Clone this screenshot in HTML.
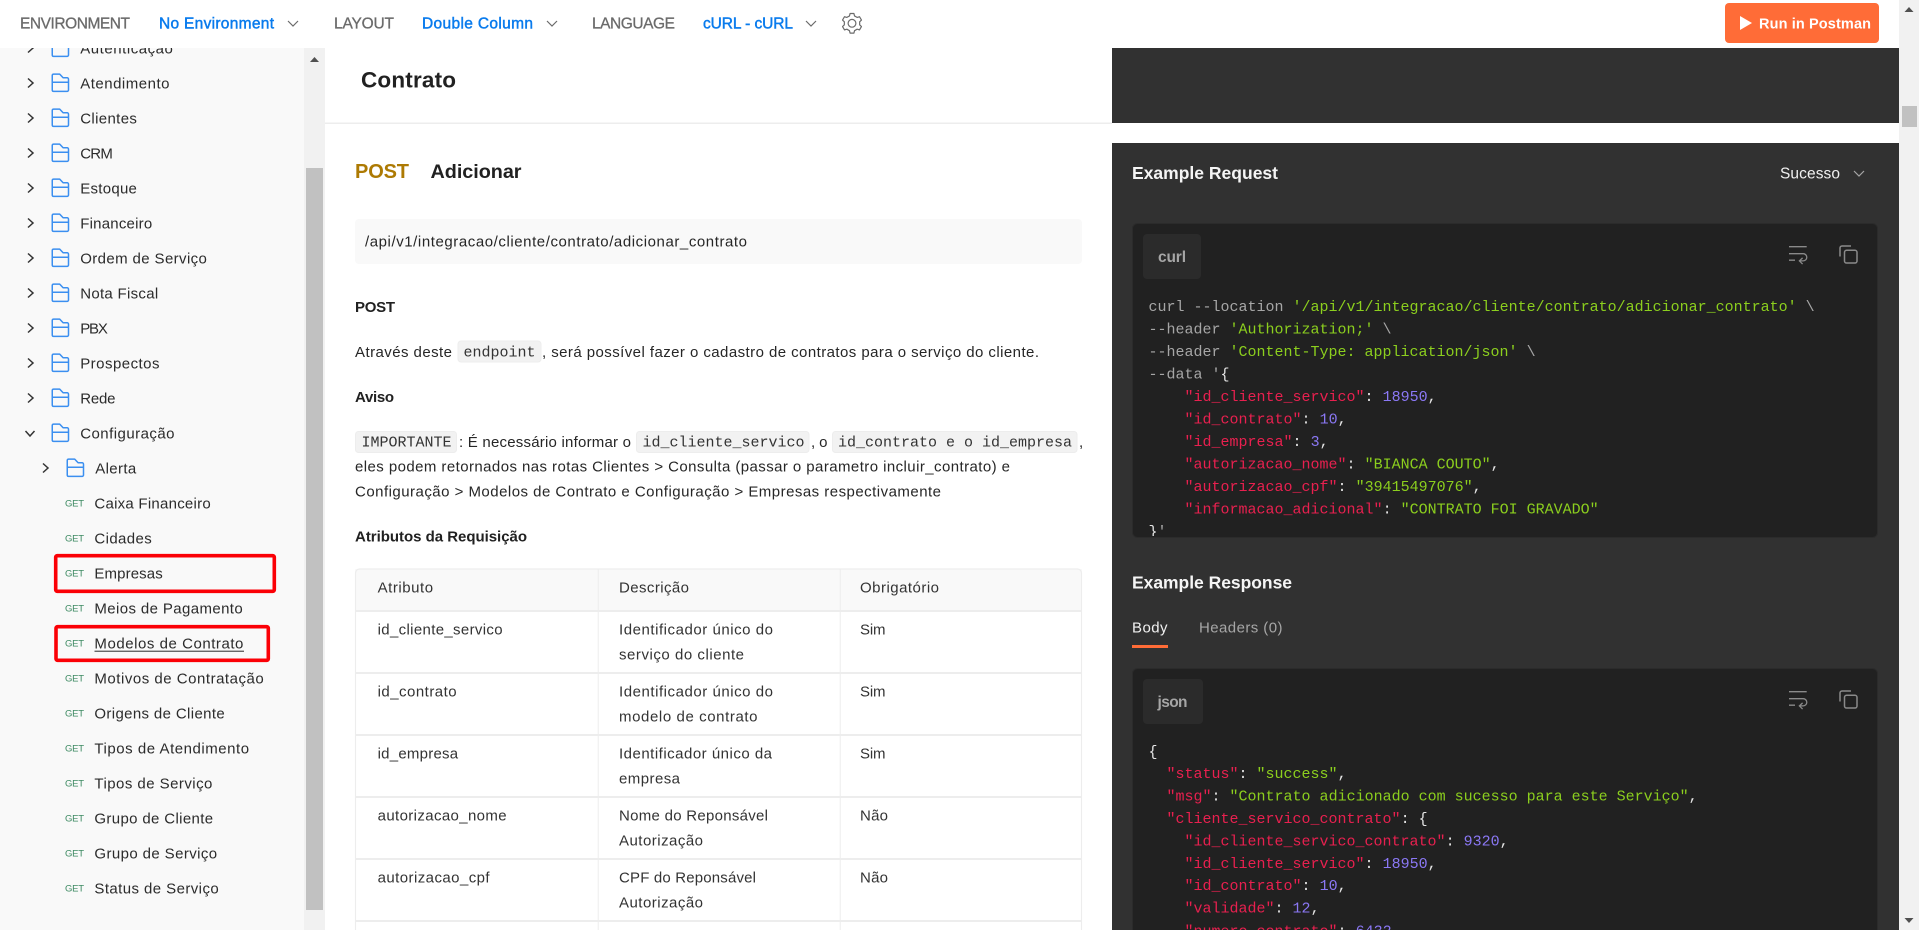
<!DOCTYPE html>
<html lang="pt">
<head>
<meta charset="utf-8">
<title>Contrato</title>
<style>
html,body{margin:0;padding:0;width:1919px;height:930px;overflow:hidden;background:#fff}
svg{display:block;position:absolute;left:0;top:0}
text{font-family:"Liberation Sans",sans-serif;white-space:pre}
.s{font-size:15px;fill:#2b2b2b}
.g{font-size:9.5px;fill:#3d8a62}
.t{font-size:15.5px;fill:#6b6b6b;stroke:#6b6b6b;stroke-width:.3px}
.b{font-size:15.5px;fill:#097bed;stroke:#097bed;stroke-width:.45px}
.p{font-size:15px;fill:#262626}
.h{font-size:15px;fill:#212121;font-weight:700}
.d{font-size:15px;fill:#333}
.w{font-size:17.5px;fill:#f5f5f5;font-weight:700}
.m{font-family:"Liberation Mono",monospace;font-size:15px;fill:#a6a6a6}
.i{font-family:"Liberation Mono",monospace;font-size:15px;fill:#333}
.k{fill:#e8204f}.v{fill:#8ccf1e}.n{fill:#8b78f5}.c{fill:#e6e6e6}
</style>
</head>
<body>
<svg width="1919" height="930" viewBox="0 0 1919 930" xmlns="http://www.w3.org/2000/svg">
<defs>
<g id="fo" fill="none" stroke="#3b8ff0" stroke-width="1.5" stroke-linejoin="round">
<path d="M.75 -7.6A1.4 1.4 0 0 1 2.1 -8.9H8.2L11.6 -5.2H15.6A1.4 1.4 0 0 1 17 -3.8V7A1.4 1.4 0 0 1 15.6 8.4H2.1A1.4 1.4 0 0 1 .75 7Z"/>
<path d="M.75 -.7H17"/>
</g>
<path id="cr" d="M-2.5 -4.5L2.5 0L-2.5 4.5" fill="none" stroke="#333" stroke-width="1.5"/>
<g id="wr" fill="none" stroke="#8a8a8a" stroke-width="1.3">
<path d="M0 0H17.7M0 7H14.2a3.6 3.6 0 0 1 0 7.2H10.8M13.6 11.2L10.4 14.2L13.6 17.4M0 13.5H6"/>
</g>
<g id="cp" fill="none" stroke="#8a8a8a" stroke-width="1.5">
<path d="M0 10.5V2a2 2 0 0 1 2-2H11"/>
<rect x="4.5" y="4.3" width="12.5" height="12.7" rx="2"/>
</g>
<clipPath id="c1"><rect x="1133" y="224" width="744" height="312"/></clipPath>
</defs>

<!-- Sidebar -->
<rect x="0" y="0" width="304" height="930" fill="#f9f9f9"/>
<rect x="304" y="0" width="21" height="930" fill="#f1f1f1"/>
<rect x="306" y="168" width="17" height="742" fill="#c1c1c1"/>
<path d="M310 62L314.5 57L319 62Z" fill="#505050"/>

<use href="#cr" x="30.5" y="48"/><use href="#fo" x="51.5" y="48"/>
<use href="#cr" x="30.5" y="83"/><use href="#fo" x="51.5" y="83"/>
<use href="#cr" x="30.5" y="118"/><use href="#fo" x="51.5" y="118"/>
<use href="#cr" x="30.5" y="153"/><use href="#fo" x="51.5" y="153"/>
<use href="#cr" x="30.5" y="188"/><use href="#fo" x="51.5" y="188"/>
<use href="#cr" x="30.5" y="223"/><use href="#fo" x="51.5" y="223"/>
<use href="#cr" x="30.5" y="258"/><use href="#fo" x="51.5" y="258"/>
<use href="#cr" x="30.5" y="293"/><use href="#fo" x="51.5" y="293"/>
<use href="#cr" x="30.5" y="328"/><use href="#fo" x="51.5" y="328"/>
<use href="#cr" x="30.5" y="363"/><use href="#fo" x="51.5" y="363"/>
<use href="#cr" x="30.5" y="398"/><use href="#fo" x="51.5" y="398"/>
<path d="M25.5 431L30 436L34.5 431" fill="none" stroke="#333" stroke-width="1.5"/><use href="#fo" x="51.5" y="433"/>
<use href="#cr" x="45.5" y="468"/><use href="#fo" x="66.5" y="468"/>

<text class="s" x="80.2" y="53.5" textLength="92.7">Autenticação</text>
<text class="s" x="80.2" y="88.5" textLength="89.3">Atendimento</text>
<text class="s" x="80.2" y="123.5" textLength="56.7">Clientes</text>
<text class="s" x="80.2" y="158.5" textLength="32.7">CRM</text>
<text class="s" x="80.2" y="193.5" textLength="56.7">Estoque</text>
<text class="s" x="80.2" y="228.5" textLength="72">Financeiro</text>
<text class="s" x="80.2" y="263.5" textLength="126.7">Ordem de Serviço</text>
<text class="s" x="80.2" y="298.5" textLength="78">Nota Fiscal</text>
<text class="s" x="80.2" y="333.5" textLength="27.7">PBX</text>
<text class="s" x="80.2" y="368.5" textLength="79.3">Prospectos</text>
<text class="s" x="80.2" y="403.5" textLength="35.3">Rede</text>
<text class="s" x="80.2" y="438.5" textLength="94.3">Configuração</text>
<text class="s" x="95.2" y="473.5" textLength="41">Alerta</text>

<text class="g" x="65" y="506.5" textLength="19">GET</text><text class="s" x="94.4" y="508.7" textLength="116.3">Caixa Financeiro</text>
<text class="g" x="65" y="541.5" textLength="19">GET</text><text class="s" x="94.4" y="543.7" textLength="57.3">Cidades</text>
<text class="g" x="65" y="576.5" textLength="19">GET</text><text class="s" x="94.4" y="578.7" textLength="68.3">Empresas</text>
<text class="g" x="65" y="611.5" textLength="19">GET</text><text class="s" x="94.4" y="613.7" textLength="148.3">Meios de Pagamento</text>
<text class="g" x="65" y="646.5" textLength="19">GET</text><text class="s" x="94.4" y="648.7" textLength="149">Modelos de Contrato</text>
<rect x="94.5" y="650.7" width="149.5" height="1" fill="#2b2b2b"/>
<text class="g" x="65" y="681.5" textLength="19">GET</text><text class="s" x="94.4" y="683.7" textLength="169.3">Motivos de Contratação</text>
<text class="g" x="65" y="716.5" textLength="19">GET</text><text class="s" x="94.4" y="718.7" textLength="130.3">Origens de Cliente</text>
<text class="g" x="65" y="751.5" textLength="19">GET</text><text class="s" x="94.4" y="753.7" textLength="154.7">Tipos de Atendimento</text>
<text class="g" x="65" y="786.5" textLength="19">GET</text><text class="s" x="94.4" y="788.7" textLength="118">Tipos de Serviço</text>
<text class="g" x="65" y="821.5" textLength="19">GET</text><text class="s" x="94.4" y="823.7" textLength="118.7">Grupo de Cliente</text>
<text class="g" x="65" y="856.5" textLength="19">GET</text><text class="s" x="94.4" y="858.7" textLength="122.7">Grupo de Serviço</text>
<text class="g" x="65" y="891.5" textLength="19">GET</text><text class="s" x="94.4" y="893.7" textLength="124.3">Status de Serviço</text>

<rect x="55.7" y="555.7" width="218.6" height="35.6" rx="1.5" fill="none" stroke="#fb0006" stroke-width="3.6"/>
<rect x="56" y="626.7" width="212.3" height="33.6" rx="1.5" fill="none" stroke="#fb0006" stroke-width="3.6"/>

<!-- Main header -->
<rect x="325" y="122.5" width="787" height="1.5" fill="#ededed"/>
<text x="361" y="87.3" textLength="95" style="font-size:22.5px;font-weight:700;fill:#212121">Contrato</text>

<text x="355" y="177.8" textLength="54" style="font-size:20px;font-weight:700;fill:#ad7a03">POST</text>
<text x="430.5" y="177.8" textLength="91" style="font-size:19.8px;font-weight:700;fill:#212121">Adicionar</text>

<rect x="355" y="219" width="727" height="45" rx="4" fill="#f9f9f9"/>
<text class="p" x="365" y="246.6" textLength="382">/api/v1/integracao/cliente/contrato/adicionar_contrato</text>

<text class="h" x="355" y="312" textLength="40">POST</text>

<text class="p" x="355" y="357" textLength="97">Através deste</text>
<rect x="458" y="341" width="83" height="21" rx="3" fill="#f2f2f2" stroke="#ededed"/>
<text class="i" x="463.5" y="356.3">endpoint</text>
<text class="p" x="542" y="357" textLength="497">, será possível fazer o cadastro de contratos para o serviço do cliente.</text>

<text class="h" x="355" y="402" textLength="39">Aviso</text>

<rect x="355.5" y="431.5" width="101" height="21" rx="3" fill="#f2f2f2" stroke="#ededed"/>
<text class="i" x="361.5" y="446.6">IMPORTANTE</text>
<text class="p" x="459" y="447" textLength="172">: É necessário informar o</text>
<rect x="636.5" y="431.5" width="172.5" height="21" rx="3" fill="#f2f2f2" stroke="#ededed"/>
<text class="i" x="642.5" y="446.6">id_cliente_servico</text>
<text class="p" x="811" y="447" textLength="16.5">, o</text>
<rect x="832.5" y="431.5" width="244.5" height="21" rx="3" fill="#f2f2f2" stroke="#ededed"/>
<text class="i" x="838" y="446.6">id_contrato e o id_empresa</text>
<text class="p" x="1079" y="447">,</text>
<text class="p" x="355" y="471.5" textLength="655">eles podem retornados nas rotas Clientes &gt; Consulta (passar o parametro incluir_contrato) e</text>
<text class="p" x="355" y="496.5" textLength="586">Configuração &gt; Modelos de Contrato e Configuração &gt; Empresas respectivamente</text>

<text class="h" x="355" y="541.5" textLength="172">Atributos da Requisição</text>

<!-- Table -->
<path d="M355 569h727v42h-727z" fill="#f9f9f9"/>
<path d="M355.5 940V573a4 4 0 0 1 4-4H1077.5a4 4 0 0 1 4 4V940" fill="none" stroke="#ededed" stroke-width="1.2"/>
<rect x="597.7" y="569" width="1" height="361" fill="#ededed"/>
<rect x="839.7" y="569" width="1" height="361" fill="#ededed"/>
<rect x="355" y="610" width="727" height="2" fill="#ededed"/>
<rect x="355" y="672" width="727" height="2" fill="#ededed"/>
<rect x="355" y="734" width="727" height="2" fill="#ededed"/>
<rect x="355" y="796" width="727" height="2" fill="#ededed"/>
<rect x="355" y="858" width="727" height="2" fill="#ededed"/>
<rect x="355" y="920" width="727" height="2" fill="#ededed"/>

<text class="d" x="377.6" y="592.5" textLength="55.5">Atributo</text>
<text class="d" x="619" y="592.5" textLength="70">Descrição</text>
<text class="d" x="860" y="592.5" textLength="79">Obrigatório</text>

<text class="d" x="377.6" y="634.5" textLength="125">id_cliente_servico</text>
<text class="d" x="619" y="634.5" textLength="154">Identificador único do</text>
<text class="d" x="619" y="659.5" textLength="125">serviço do cliente</text>
<text class="d" x="860" y="634.5" textLength="25.5">Sim</text>

<text class="d" x="377.6" y="696.5" textLength="79">id_contrato</text>
<text class="d" x="619" y="696.5" textLength="154">Identificador único do</text>
<text class="d" x="619" y="721.5" textLength="138.5">modelo de contrato</text>
<text class="d" x="860" y="696.5" textLength="25.5">Sim</text>

<text class="d" x="377.6" y="758.5" textLength="80.5">id_empresa</text>
<text class="d" x="619" y="758.5" textLength="153">Identificador único da</text>
<text class="d" x="619" y="783.5" textLength="61">empresa</text>
<text class="d" x="860" y="758.5" textLength="25.5">Sim</text>

<text class="d" x="377.6" y="820.5" textLength="129">autorizacao_nome</text>
<text class="d" x="619" y="820.5" textLength="149">Nome do Reponsável</text>
<text class="d" x="619" y="845.5" textLength="84">Autorização</text>
<text class="d" x="860" y="820.5" textLength="28">Não</text>

<text class="d" x="377.6" y="882.5" textLength="112">autorizacao_cpf</text>
<text class="d" x="619" y="882.5" textLength="137">CPF do Reponsável</text>
<text class="d" x="619" y="907.5" textLength="84">Autorização</text>
<text class="d" x="860" y="882.5" textLength="28">Não</text>

<!-- Dark panel -->
<rect x="1112" y="48" width="787" height="75" fill="#313131"/>
<rect x="1112" y="143" width="787" height="787" fill="#313131"/>

<text class="w" x="1132" y="179" textLength="146">Example Request</text>
<text x="1780" y="178.5" textLength="60" style="font-size:15.5px;fill:#f0f0f0">Sucesso</text>
<path d="M1854 171L1859 176L1864 171" fill="none" stroke="#a6a6a6" stroke-width="1.2"/>

<rect x="1132.5" y="223.5" width="745" height="314" rx="5" fill="#212121" stroke="#2b2b2b"/>
<rect x="1143" y="234" width="58" height="45" rx="4" fill="#2b2b2b"/>
<text x="1158" y="262" textLength="28" style="font-size:15.5px;font-weight:700;fill:#a6a6a6">curl</text>
<use href="#wr" x="1789" y="246.7"/>
<use href="#cp" x="1840" y="246"/>

<g clip-path="url(#c1)">
<text class="m" x="1148.5" y="311">curl --location <tspan class="v">'/api/v1/integracao/cliente/contrato/adicionar_contrato'</tspan> \</text>
<text class="m" x="1148.5" y="333.5">--header <tspan class="v">'Authorization;'</tspan> \</text>
<text class="m" x="1148.5" y="356">--header <tspan class="v">'Content-Type: application/json'</tspan> \</text>
<text class="m" x="1148.5" y="378.5">--data '<tspan class="c">{</tspan></text>
<text class="m c" x="1148.5" y="401">    <tspan class="k">"id_cliente_servico"</tspan>: <tspan class="n">18950</tspan>,</text>
<text class="m c" x="1148.5" y="423.5">    <tspan class="k">"id_contrato"</tspan>: <tspan class="n">10</tspan>,</text>
<text class="m c" x="1148.5" y="446">    <tspan class="k">"id_empresa"</tspan>: <tspan class="n">3</tspan>,</text>
<text class="m c" x="1148.5" y="468.5">    <tspan class="k">"autorizacao_nome"</tspan>: <tspan class="v">"BIANCA COUTO"</tspan>,</text>
<text class="m c" x="1148.5" y="491">    <tspan class="k">"autorizacao_cpf"</tspan>: <tspan class="v">"39415497076"</tspan>,</text>
<text class="m c" x="1148.5" y="513.5">    <tspan class="k">"informacao_adicional"</tspan>: <tspan class="v">"CONTRATO FOI GRAVADO"</tspan></text>
<text class="m c" x="1148.5" y="536">}<tspan style="fill:#a6a6a6">'</tspan></text>
</g>

<text class="w" x="1132" y="588.5" textLength="160">Example Response</text>
<text x="1132" y="632.5" textLength="35.5" style="font-size:15px;fill:#f0f0f0">Body</text>
<text x="1199" y="632.5" textLength="83.5" style="font-size:15px;fill:#a6a6a6">Headers (0)</text>
<rect x="1132" y="645" width="36" height="3" fill="#ff6c37"/>

<rect x="1132.5" y="668.5" width="745" height="280" rx="5" fill="#212121" stroke="#2b2b2b"/>
<rect x="1143" y="679" width="60" height="45" rx="4" fill="#2b2b2b"/>
<text x="1157.5" y="707" textLength="30" style="font-size:15.5px;font-weight:700;fill:#a6a6a6">json</text>
<use href="#wr" x="1789" y="691.7"/>
<use href="#cp" x="1840" y="691"/>

<text class="m c" x="1148.5" y="756">{</text>
<text class="m c" x="1148.5" y="778">  <tspan class="k">"status"</tspan>: <tspan class="v">"success"</tspan>,</text>
<text class="m c" x="1148.5" y="800.5">  <tspan class="k">"msg"</tspan>: <tspan class="v">"Contrato adicionado com sucesso para este Serviço"</tspan>,</text>
<text class="m c" x="1148.5" y="823">  <tspan class="k">"cliente_servico_contrato"</tspan>: {</text>
<text class="m c" x="1148.5" y="845.5">    <tspan class="k">"id_cliente_servico_contrato"</tspan>: <tspan class="n">9320</tspan>,</text>
<text class="m c" x="1148.5" y="868">    <tspan class="k">"id_cliente_servico"</tspan>: <tspan class="n">18950</tspan>,</text>
<text class="m c" x="1148.5" y="890">    <tspan class="k">"id_contrato"</tspan>: <tspan class="n">10</tspan>,</text>
<text class="m c" x="1148.5" y="912.5">    <tspan class="k">"validade"</tspan>: <tspan class="n">12</tspan>,</text>
<text class="m c" x="1148.5" y="935.5">    <tspan class="k">"numero_contrato"</tspan>: <tspan class="n">6432</tspan>,</text>

<!-- Page scrollbar -->
<rect x="1899" y="0" width="20" height="930" fill="#f1f1f1"/>
<rect x="1902" y="106" width="15" height="21" fill="#c1c1c1"/>
<path d="M1904.5 12L1909 7L1913.5 12Z" fill="#505050"/>
<path d="M1904.5 918L1909 923L1913.5 918Z" fill="#505050"/>

<!-- Top bar -->
<rect x="0" y="0" width="1899" height="48" fill="#fff"/>
<text class="t" x="20" y="28.5" textLength="110">ENVIRONMENT</text>
<text class="b" x="159" y="28.5" textLength="115">No Environment</text>
<path d="M288 21L293 26L298 21" fill="none" stroke="#6b6b6b" stroke-width="1.2"/>
<text class="t" x="334" y="28.5" textLength="60">LAYOUT</text>
<text class="b" x="422" y="28.5" textLength="111">Double Column</text>
<path d="M547 21L552 26L557 21" fill="none" stroke="#6b6b6b" stroke-width="1.2"/>
<text class="t" x="592" y="28.5" textLength="83">LANGUAGE</text>
<text class="b" x="703" y="28.5" textLength="90">cURL - cURL</text>
<path d="M806 21L811 26L816 21" fill="none" stroke="#6b6b6b" stroke-width="1.2"/>
<g transform="translate(852 23.3)" fill="none" stroke="#6b6b6b" stroke-width="1.2" stroke-linejoin="round">
<path d="M-2.54 -7.37L-1.91 -9.82L1.91 -9.82L2.54 -7.37L5.12 -5.89L7.55 -6.56L9.46 -3.26L7.66 -1.49L7.66 1.49L9.46 3.26L7.55 6.56L5.12 5.89L2.54 7.37L1.91 9.82L-1.91 9.82L-2.54 7.37L-5.12 5.89L-7.55 6.56L-9.46 3.26L-7.66 1.49L-7.66 -1.49L-9.46 -3.26L-7.55 -6.56L-5.12 -5.89Z"/>
<circle cx="0" cy="0" r="3.9"/>
</g>

<rect x="1725" y="3" width="154" height="40" rx="4" fill="#ff6c37"/>
<path d="M1740 16L1752 23L1740 30Z" fill="#fff"/>
<text x="1759" y="28.5" textLength="112" style="font-size:14.5px;font-weight:700;fill:#fff">Run in Postman</text>
</svg>
</body>
</html>
